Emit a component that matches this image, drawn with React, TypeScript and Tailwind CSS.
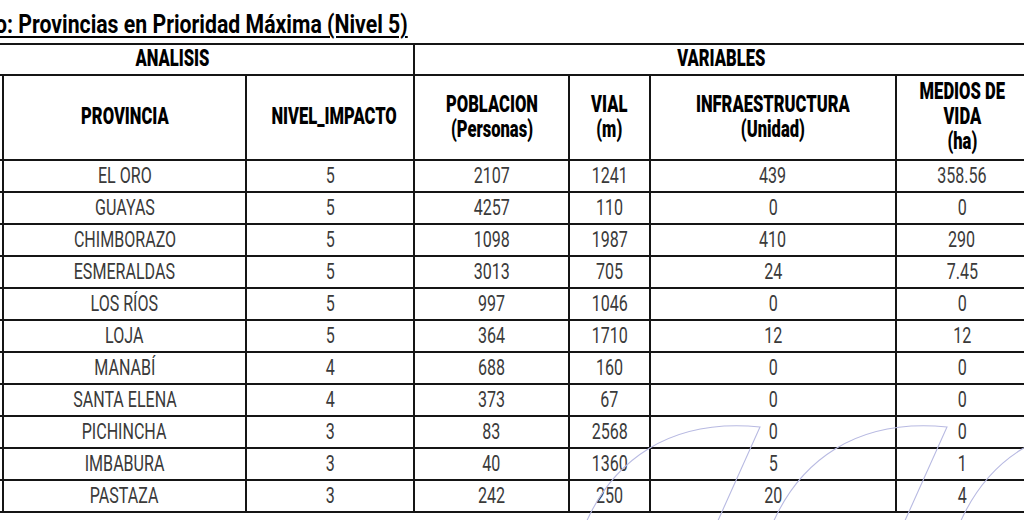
import React from "react";

const rows: [string, string, string, string, string, string][] = [
  ["EL ORO", "5", "2107", "1241", "439", "358.56"],
  ["GUAYAS", "5", "4257", "110", "0", "0"],
  ["CHIMBORAZO", "5", "1098", "1987", "410", "290"],
  ["ESMERALDAS", "5", "3013", "705", "24", "7.45"],
  ["LOS RÍOS", "5", "997", "1046", "0", "0"],
  ["LOJA", "5", "364", "1710", "12", "12"],
  ["MANABÍ", "4", "688", "160", "0", "0"],
  ["SANTA ELENA", "4", "373", "67", "0", "0"],
  ["PICHINCHA", "3", "83", "2568", "0", "0"],
  ["IMBABURA", "3", "40", "1360", "5", "1"],
  ["PASTAZA", "3", "242", "250", "20", "4"],
];

const font = { fontFamily: "Roboto, 'Liberation Sans', sans-serif" };

function H({ children }: { children: React.ReactNode }) {
  return (
    <span className="inline-block scale-x-[0.72] font-black text-[23px] leading-[25px] text-black whitespace-nowrap">
      {children}
    </span>
  );
}

function B({ children }: { children: React.ReactNode }) {
  return (
    <span className="inline-block scale-x-[0.73] text-[22px] leading-[25px] text-[#3a3a3a] whitespace-nowrap">
      {children}
    </span>
  );
}

const cell = "border-2 border-[#151515] text-center align-middle p-0";

export default function App() {
  const offsets = [0, 187, 374];
  return (
    <div className="relative w-[1024px] h-[520px] overflow-hidden bg-white" style={font}>
      <div className="h-[43px] pt-[12px] whitespace-nowrap flex items-start">
        <span className="inline-block origin-left scale-x-[0.85] ml-[-5px] font-bold text-[25px] leading-[25px] text-black underline decoration-2 underline-offset-[3px]">
          o: Provincias en Prioridad Máxima (Nivel 5)
        </span>
      </div>
      <table className="table-fixed border-collapse ml-[-71px] w-[1098px]">
        <colgroup>
          <col className="w-[73px]" />
          <col className="w-[243px]" />
          <col className="w-[168px]" />
          <col className="w-[155px]" />
          <col className="w-[81px]" />
          <col className="w-[246px]" />
          <col className="w-[132px]" />
        </colgroup>
        <thead>
          <tr className="h-[31px]">
            <th colSpan={3} className={cell}>
              <H>ANALISIS</H>
            </th>
            <th colSpan={4} className={cell}>
              <H>VARIABLES</H>
            </th>
          </tr>
          <tr className="h-[85px]">
            <th className={cell}></th>
            <th className={cell}>
              <H>PROVINCIA</H>
            </th>
            <th className={cell}>
              <H>NIVEL_IMPACTO</H>
            </th>
            <th className={cell}>
              <H>
                POBLACION
                <br />
                (Personas)
              </H>
            </th>
            <th className={cell}>
              <H>
                VIAL
                <br />
                (m)
              </H>
            </th>
            <th className={cell}>
              <H>
                INFRAESTRUCTURA
                <br />
                (Unidad)
              </H>
            </th>
            <th className={cell}>
              <H>
                MEDIOS DE
                <br />
                VIDA
                <br />
                (ha)
              </H>
            </th>
          </tr>
        </thead>
        <tbody>
          {rows.map((r) => (
            <tr key={r[0]} className="h-[32px]">
              <td className={cell}></td>
              {r.map((v, i) => (
                <td key={i} className={cell}>
                  <B>{v}</B>
                </td>
              ))}
            </tr>
          ))}
        </tbody>
      </table>
      <svg
        className="absolute left-0 top-0 pointer-events-none"
        width="1024"
        height="520"
        viewBox="0 0 1024 520"
        fill="none"
      >
        {offsets.map((o) => (
          <path
            key={o}
            transform={`translate(${o} 0)`}
            d="M585 525 C 612 462, 668 418, 760 427 L 716 525"
            stroke="#b8bae2"
            strokeWidth="1.1"
          />
        ))}
      </svg>
    </div>
  );
}
